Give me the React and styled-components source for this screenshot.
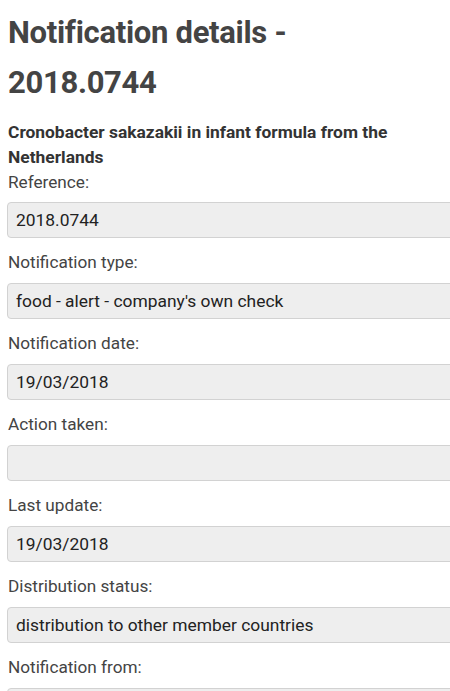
import React from "react";
import styled, { createGlobalStyle } from "styled-components";

const Global = createGlobalStyle`
  html, body { margin: 0; padding: 0; background: #fff; overflow: hidden; }
  body { font-family: Roboto, "Noto Sans", sans-serif; color: #333; }
`;

const Page = styled.div`
  width: 450px;
  padding: 8px 0 0 7px;
  box-sizing: border-box;
  overflow: hidden;
`;

const Title = styled.h1`
  margin: 0 0 12px 1px;
  font-size: 31px;
  letter-spacing: -0.3px;
  line-height: 50px;
  font-weight: 700;
  color: #444;
`;

const Subtitle = styled.h2`
  margin: 0 0 0 1px;
  font-size: 17.4px;
  line-height: 25px;
  font-weight: 700;
  color: #333;
  padding-right: 40px;
`;

const Group = styled.div`
  display: flex;
  flex-direction: column;
  margin-bottom: 12px;
`;

const Label = styled.div`
  font-size: 17.2px;
  line-height: 25px;
  color: #444;
  margin: 0 0 ${(p) => (p.$first ? 7 : 8)}px 1px;
`;

const Field = styled.div`
  width: 470px;
  height: 36px;
  box-sizing: border-box;
  border: 1px solid #d2d2d2;
  border-radius: 4px;
  background: #eeeeee;
  padding: 5px 8px;
  font-size: 17.4px;
  line-height: 24px;
  color: #222;
  white-space: nowrap;
`;

const fields = [
  ["Reference:", "2018.0744"],
  ["Notification type:", "food - alert - company's own check"],
  ["Notification date:", "19/03/2018"],
  ["Action taken:", ""],
  ["Last update:", "19/03/2018"],
  ["Distribution status:", "distribution to other member countries"],
  ["Notification from:", ""],
];

export default function App() {
  return (
    <>
      <Global />
      <Page>
        <Title>
          Notification details -<br />
          2018.0744
        </Title>
        <Subtitle>Cronobacter sakazakii in infant formula from the Netherlands</Subtitle>
        {fields.map(([label, value], i) => (
          <Group key={label}>
            <Label $first={i === 0}>{label}</Label>
            <Field>{value}</Field>
          </Group>
        ))}
      </Page>
    </>
  );
}
